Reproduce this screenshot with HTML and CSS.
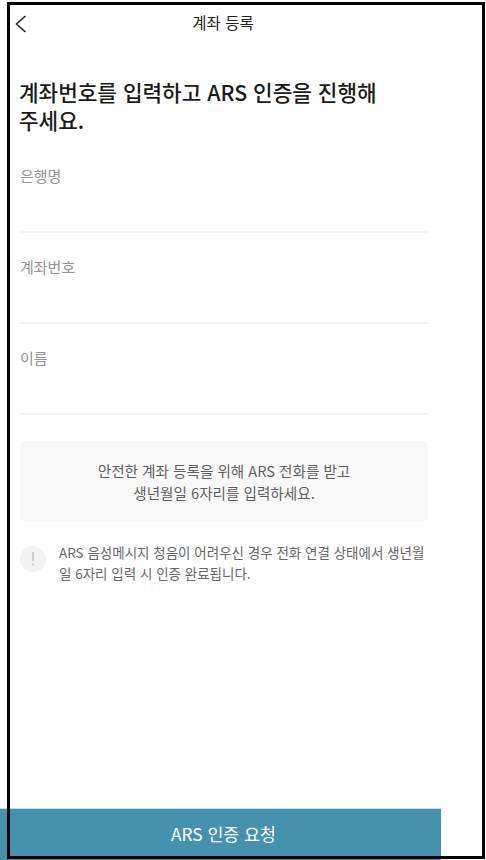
FILE: index.html
```html
<!DOCTYPE html>
<html lang="ko">
<head>
<meta charset="utf-8">
<title>계좌 등록</title>
<link rel="stylesheet" href="styles.css">
</head>
<body>
<div class="page">
  <header class="nav">
    <svg class="back" width="12" height="18" viewBox="0 0 12 18"><path d="M10.5 1 L1.5 9 L10.5 17" fill="none" stroke="#222" stroke-width="1.5"/></svg>
    <span class="nav-title">계좌 등록</span>
  </header>
  <main class="content">
    <h1 class="headline">계좌번호를 입력하고 ARS 인증을 진행해<br>주세요.</h1>
    <div class="field"><div class="label">은행명</div></div>
    <div class="field"><div class="label">계좌번호</div></div>
    <div class="field"><div class="label">이름</div></div>
    <div class="info">안전한 계좌 등록을 위해 ARS 전화를 받고<br>생년월일 6자리를 입력하세요.</div>
    <div class="notice">
      <span class="notice-icon"><svg width="4" height="14" viewBox="0 0 4 14"><rect x="1.2" y="0" width="1.6" height="9.5" fill="#c4c4c6"/><rect x="1.2" y="11.5" width="1.6" height="2" fill="#c4c4c6"/></svg></span>
      <p class="notice-text">ARS 음성메시지 청음이 어려우신 경우 전화 연결 상태에서 생년월일 6자리 입력 시 인증 완료됩니다.</p>
    </div>
  </main>
  <button class="cta">ARS 인증 요청</button>
  <div class="frame"></div>
</div>
</body>
</html>
```
FILE: styles.css
```css
* { box-sizing: border-box; }
html, body { margin: 0; padding: 0; background: #fff; }
body { font-family: "Noto Sans CJK KR", "Noto Sans", sans-serif; }
.page { position: relative; width: 486px; height: 860px; overflow: hidden; display: flex; flex-direction: column; }
.nav { width: 446px; height: 44px; margin-top: 0; position: relative; display: flex; align-items: center; justify-content: center; flex: none; }
.back { position: absolute; left: 15px; top: 15px; }
.nav-title { font-size: 15.5px; color: #222; }
.content { flex: 1; padding: 34px 58px 0 20px; }
.headline { margin: 0 0 8px -1px; font-size: 21.3px; line-height: 28px; font-weight: 500; color: #1a1a1a; width: 390px; }
.field { height: 91px; padding-top: 23px; border-bottom: 2px solid #f4f4f4; }
.label { font-size: 15px; line-height: 22px; color: #939393; }
.info { margin-top: 26px; height: 81px; background: #f8f8f9; border-radius: 5px; display: flex; align-items: center; justify-content: center; text-align: center; font-size: 14.6px; line-height: 22px; color: #5f5f5f; }
.notice { display: flex; margin-top: 20px; gap: 13px; }
.notice-icon { flex: none; width: 26px; height: 26px; margin-top: 4px; border-radius: 50%; background: #f1f2f4; display: flex; align-items: center; justify-content: center; }
.notice-text { margin: 0; font-size: 13.5px; line-height: 21px; color: #666; }
.cta { flex: none; width: 441px; height: 52px; border: 0; border-top: 1px solid #c9dfe7; background: #4691ad; color: #fff; font: 400 17.3px "Noto Sans CJK KR", sans-serif; padding: 0 0 3px 6px; }
.frame { position: absolute; left: 7px; top: 2px; width: 478px; height: 857px; border: 3px solid #000; pointer-events: none; }
```
